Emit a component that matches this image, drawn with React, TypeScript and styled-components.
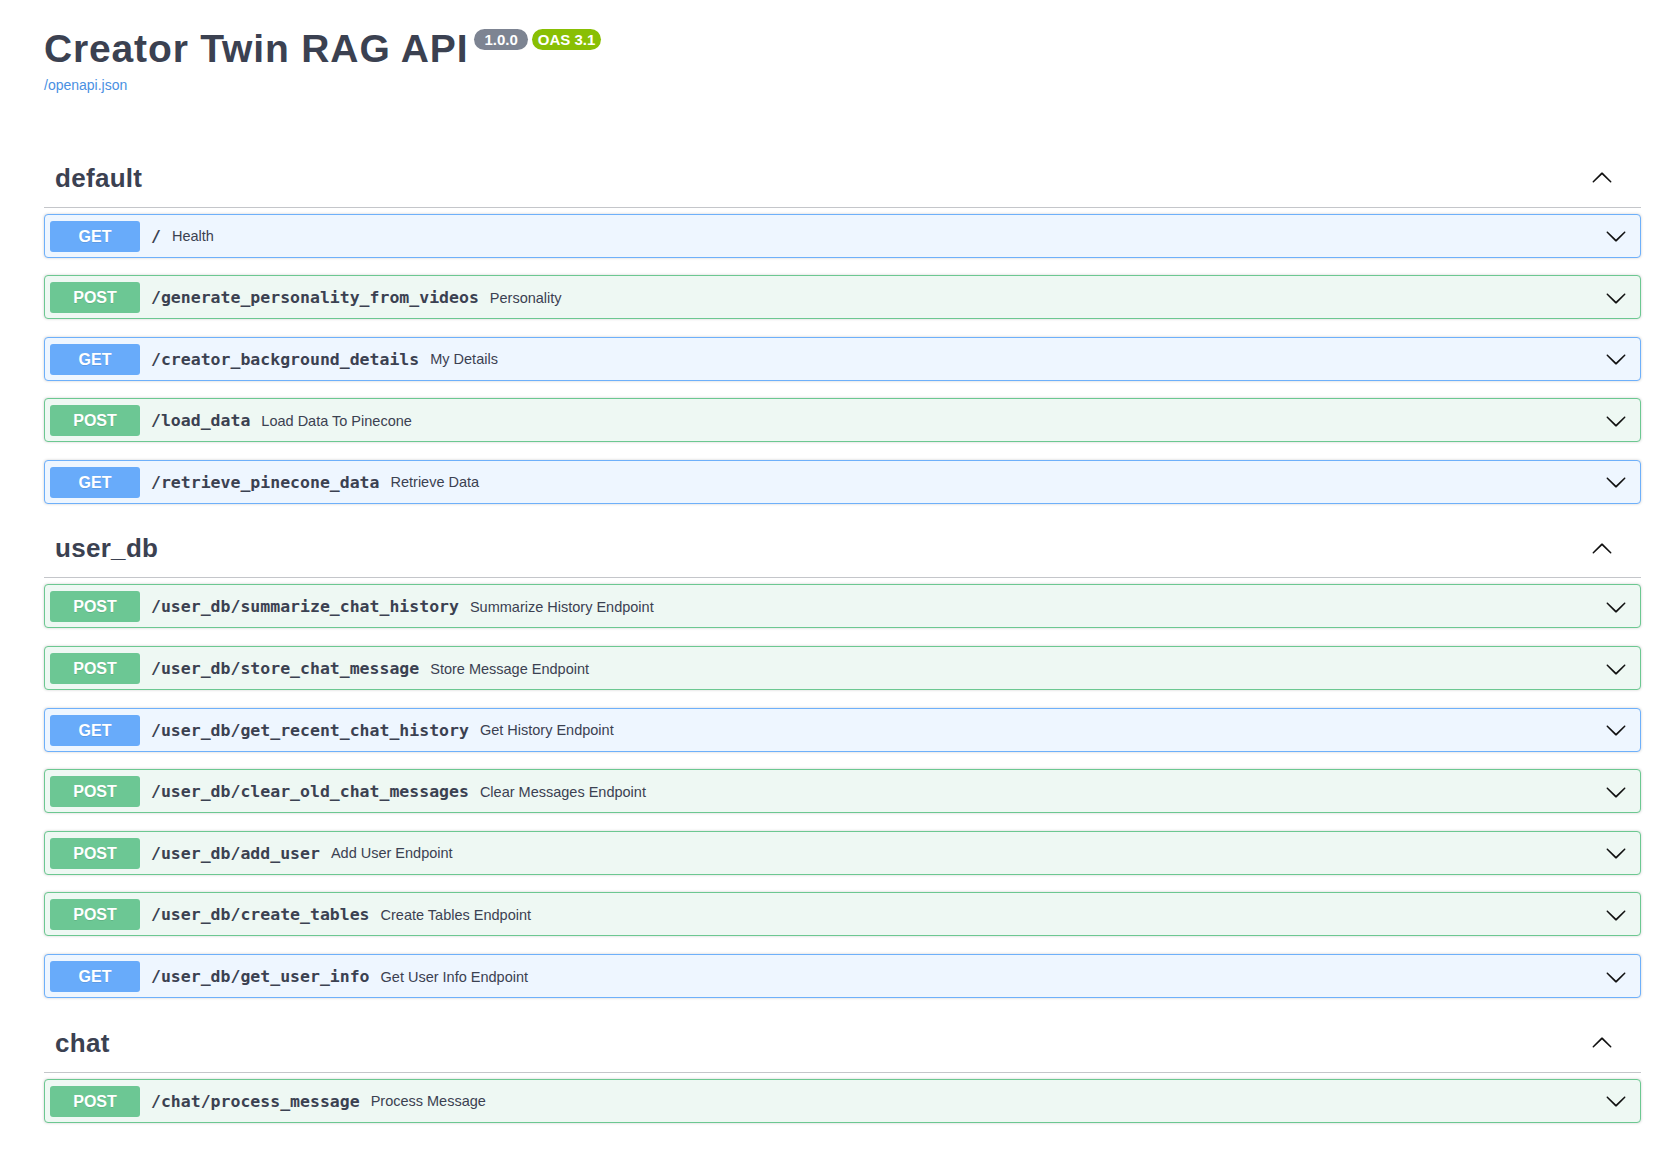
import React from "react";
import styled, { createGlobalStyle } from "styled-components";

const GlobalStyle = createGlobalStyle`
  html, body { margin: 0; padding: 0; background: #fff; }
  body { font-family: "Liberation Sans", Arial, sans-serif; color: #3b4151; }
  * { box-sizing: border-box; }
`;

type Method = "GET" | "POST";

const palette: Record<Method, { main: string; border: string; bg: string }> = {
  GET: { main: "#68abfa", border: "#6eb0fa", bg: "#eef6ff" },
  POST: { main: "#6cc794", border: "#6cc891", bg: "#eef8f3" },
};

const Page = styled.div`
  padding: 26px 24px 40px 44px;
`;

const Info = styled.div`
  margin-bottom: 56.5px;
`;

const TitleRow = styled.h2`
  display: flex;
  align-items: flex-start;
  margin: 0;
  font-size: 39px;
  line-height: 45px;
  font-weight: 700;
  letter-spacing: 0.85px;
  color: #3b4151;
`;

const Badge = styled.span<{ $color: string; $pad: number; $gap: number }>`
  margin-top: 2.5px;
  margin-left: ${(p) => p.$gap}px;
  height: 21px;
  padding: 0 ${(p) => p.$pad}px;
  border-radius: 57px;
  background: ${(p) => p.$color};
  color: #fff;
  font-size: 15px;
  line-height: 21px;
  letter-spacing: 0;
  font-weight: 700;
`;

const SpecLink = styled.a`
  display: inline-block;
  margin-top: 6px;
  font-size: 14px;
  line-height: 16px;
  color: #4990e2;
  text-decoration: none;
`;

const Section = styled.section`
  display: flex;
  flex-direction: column;
`;

const TagHeader = styled.h3`
  display: flex;
  align-items: center;
  justify-content: space-between;
  height: 57px;
  margin: 0 0 6px;
  padding: 0 22px 1px 11px;
  border-bottom: 1px solid rgba(59, 65, 81, 0.3);
  font-size: 26px;
  letter-spacing: 0.3px;
  font-weight: 700;
  color: #3b4151;
`;

const ToggleButton = styled.span`
  display: flex;
  align-items: center;
  padding: 0 6px;
  color: #111;
`;

const OpBlock = styled.div<{ $method: Method }>`
  display: flex;
  align-items: center;
  margin-bottom: 17.6px;
  padding: 6px 5px 5px;
  border: 1px solid ${(p) => palette[p.$method].border};
  border-radius: 4px;
  background: ${(p) => palette[p.$method].bg};
  box-shadow: 0 0 3px rgba(0, 0, 0, 0.19);
`;

const MethodBadge = styled.span<{ $method: Method }>`
  flex: none;
  width: 90px;
  height: 31px;
  border-radius: 3px;
  background: ${(p) => palette[p.$method].main};
  color: #fff;
  font-size: 16px;
  font-weight: 700;
  line-height: 31px;
  text-align: center;
  text-shadow: 0 1px 0 rgba(0, 0, 0, 0.1);
`;

const Path = styled.span`
  padding: 0 11px;
  font-family: "DejaVu Sans Mono", "Liberation Mono", monospace;
  font-size: 16.5px;
  font-weight: 700;
  color: #3b4151;
`;

const Summary = styled.span`
  flex: 1;
  font-size: 14.5px;
  color: #3b4151;
`;

const RowArrow = styled.span`
  display: flex;
  margin-right: 8px;
  color: #111;
`;

const Chevron = ({ up }: { up?: boolean }) => (
  <svg width="22" height="22" viewBox="0 0 20 20" fill="currentColor" aria-hidden="true">
    <g transform={up ? "rotate(180 10 10)" : undefined}>
      <path d="M17.418 6.109c.272-.268.709-.268.979 0s.271.701 0 .969l-7.908 7.83c-.27.268-.707.268-.979 0l-7.908-7.83c-.27-.268-.27-.701 0-.969.271-.268.709-.268.979 0L10 13.25l7.418-7.141z" />
    </g>
  </svg>
);

type Op = { method: Method; path: string; summary: string };

const sections: { tag: string; ops: Op[] }[] = [
  {
    tag: "default",
    ops: [
      { method: "GET", path: "/", summary: "Health" },
      { method: "POST", path: "/generate_personality_from_videos", summary: "Personality" },
      { method: "GET", path: "/creator_background_details", summary: "My Details" },
      { method: "POST", path: "/load_data", summary: "Load Data To Pinecone" },
      { method: "GET", path: "/retrieve_pinecone_data", summary: "Retrieve Data" },
    ],
  },
  {
    tag: "user_db",
    ops: [
      { method: "POST", path: "/user_db/summarize_chat_history", summary: "Summarize History Endpoint" },
      { method: "POST", path: "/user_db/store_chat_message", summary: "Store Message Endpoint" },
      { method: "GET", path: "/user_db/get_recent_chat_history", summary: "Get History Endpoint" },
      { method: "POST", path: "/user_db/clear_old_chat_messages", summary: "Clear Messages Endpoint" },
      { method: "POST", path: "/user_db/add_user", summary: "Add User Endpoint" },
      { method: "POST", path: "/user_db/create_tables", summary: "Create Tables Endpoint" },
      { method: "GET", path: "/user_db/get_user_info", summary: "Get User Info Endpoint" },
    ],
  },
  {
    tag: "chat",
    ops: [{ method: "POST", path: "/chat/process_message", summary: "Process Message" }],
  },
];

export default function App() {
  return (
    <>
      <GlobalStyle />
      <Page>
        <Info>
          <TitleRow>
            <span>Creator Twin RAG API</span>
            <Badge $color="#7d8492" $pad={10} $gap={6}>1.0.0</Badge>
            <Badge $color="#89bf04" $pad={6} $gap={4}>OAS 3.1</Badge>
          </TitleRow>
          <SpecLink href="#">/openapi.json</SpecLink>
        </Info>
        {sections.map((s) => (
          <Section key={s.tag}>
            <TagHeader>
              <span>{s.tag}</span>
              <ToggleButton>
                <Chevron up />
              </ToggleButton>
            </TagHeader>
            {s.ops.map((op) => (
              <OpBlock key={op.path} $method={op.method}>
                <MethodBadge $method={op.method}>{op.method}</MethodBadge>
                <Path>{op.path}</Path>
                <Summary>{op.summary}</Summary>
                <RowArrow>
                  <Chevron />
                </RowArrow>
              </OpBlock>
            ))}
          </Section>
        ))}
      </Page>
    </>
  );
}
